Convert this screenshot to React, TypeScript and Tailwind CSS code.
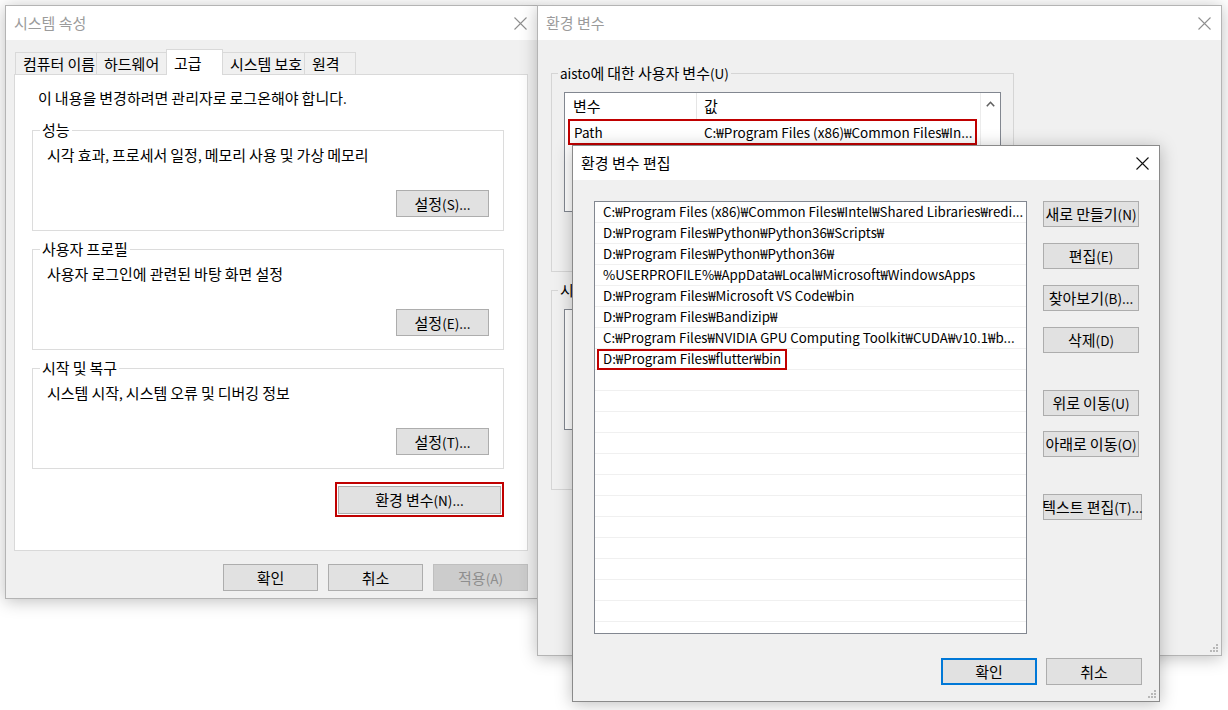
import React from 'react';

function T({ s }: { s: string }) {
  const parts = s.split(/([\u3131-\u318E\uAC00-\uD7A3]+)/);
  return (
    <span>
      {parts.map((p, i) =>
        i % 2 === 1 ? (
          <span key={i} className="text-[15px]">
            {p}
          </span>
        ) : (
          <React.Fragment key={i}>{p}</React.Fragment>
        )
      )}
    </span>
  );
}

function CloseX({ dark }: { dark?: boolean }) {
  return (
    <svg width="13" height="13" viewBox="0 0 13 13" className="block">
      <path d="M0.5 0.5L12.5 12.5M12.5 0.5L0.5 12.5" stroke={dark ? '#111111' : '#8f8f8f'} strokeWidth="1.1" />
    </svg>
  );
}

function Grip() {
  const pts = [
    [6, 0],
    [6, 3],
    [3, 3],
    [6, 6],
    [3, 6],
    [0, 6],
  ];
  return (
    <svg width="8" height="8" viewBox="0 0 8 8" className="absolute bottom-[3px] right-[3px]">
      {pts.map(([x, y], i) => (
        <rect key={i} x={x} y={y} width="2" height="2" fill="#b8b8b8" />
      ))}
    </svg>
  );
}

type BtnProps = {
  children: string;
  w?: string;
  h?: string;
  disabled?: boolean;
  primary?: boolean;
  className?: string;
};

function Btn({ children, w = 'w-[96px]', h = 'h-[26px]', disabled, primary, className = '' }: BtnProps) {
  const tone = disabled
    ? 'border bg-[#cccccc] border-[#bfbfbf] text-[#8e8e8e]'
    : primary
    ? 'border-2 bg-[#e1e1e1] border-[#0078d7] text-black'
    : 'border bg-[#e1e1e1] border-[#adadad] text-black';
  return (
    <div className={`flex shrink-0 items-center justify-center whitespace-nowrap leading-none ${w} ${h} ${tone} ${className}`}>
      <T s={children} />
    </div>
  );
}

function Win({
  className,
  title,
  active,
  grip,
  children,
}: {
  className: string;
  title: string;
  active?: boolean;
  grip?: boolean;
  children: React.ReactNode;
}) {
  return (
    <div
      className={`absolute flex flex-col border bg-[#f0f0f0] shadow-[0_2px_16px_rgba(0,0,0,0.26)] ${
        active ? 'border-[#8a8a8a]' : 'border-[#b4b4b4]'
      } ${className}`}
    >
      <div className="flex h-[34px] shrink-0 items-center justify-between bg-white pl-[8px] pr-[10px]">
        <span className={`text-[15px] ${active ? 'text-black' : 'text-[#9b9b9b]'}`}>{title}</span>
        <CloseX dark={active} />
      </div>
      {children}
      {grip && <Grip />}
    </div>
  );
}

function PerfGroup({ label, text, btn }: { label: string; text: string; btn: string }) {
  return (
    <div className="relative flex h-[101px] flex-col border border-[#dcdcdc]">
      <span className="absolute left-[7px] top-[-10px] bg-white px-[2px] leading-[18px]">
        <T s={label} />
      </span>
      <div className="pl-[14px] pt-[15px] leading-[18px]">
        <T s={text} />
      </div>
      <Btn w="w-[93px]" h="h-[27px]" className="mb-[13px] mr-[14px] mt-auto self-end">
        {btn}
      </Btn>
    </div>
  );
}

function SystemProps() {
  const tabs = [
    { t: '컴퓨터 이름', w: 'w-[82px]', sel: false },
    { t: '하드웨어', w: 'w-[71px]', sel: false },
    { t: '고급', w: 'w-[57px]', sel: true },
    { t: '시스템 보호', w: 'w-[83px]', sel: false },
    { t: '원격', w: 'w-[52px]', sel: false },
  ];
  return (
    <Win className="left-[5px] top-[5px] h-[594px] w-[533px]" title="시스템 속성">
      <div className="flex flex-1 flex-col px-[8px] pt-[9px]">
        <div className="flex h-[25px] items-end pl-[1px]">
          {tabs.map((tab, i) => (
            <div
              key={tab.t}
              className={`flex items-center whitespace-nowrap border border-b-0 border-[#d9d9d9] pl-[7px] leading-none ${tab.w} ${
                i > 0 ? '-ml-px' : ''
              } ${tab.sel ? 'relative z-10 -mb-px h-[26px] bg-white' : 'h-[22px] bg-[#f0f0f0]'}`}
            >
              <T s={tab.t} />
            </div>
          ))}
        </div>
        <div className="mr-[1px] flex h-[477px] flex-col border border-[#d9d9d9] bg-white">
          <div className="pl-[23px] pt-[14px] leading-[18px]">
            <T s="이 내용을 변경하려면 관리자로 로그온해야 합니다." />
          </div>
          <div className="ml-[17px] mt-[23px] flex w-[472px] flex-col gap-[18px]">
            <PerfGroup label="성능" text="시각 효과, 프로세서 일정, 메모리 사용 및 가상 메모리" btn="설정(S)..." />
            <PerfGroup label="사용자 프로필" text="사용자 로그인에 관련된 바탕 화면 설정" btn="설정(E)..." />
            <PerfGroup label="시작 및 복구" text="시스템 시작, 시스템 오류 및 디버깅 정보" btn="설정(T)..." />
          </div>
          <div className="ml-[17px] mt-[13px] flex w-[472px] justify-end">
            <div className="border-2 border-[#c00000] px-[1px] pb-[1px] pt-[2px]">
              <Btn w="w-[163px]" h="h-[28px]">
                환경 변수(N)...
              </Btn>
            </div>
          </div>
        </div>
        <div className="mt-[13px] flex justify-end gap-[10px] pr-[1px]">
          <Btn w="w-[95px]" h="h-[27px]">
            확인
          </Btn>
          <Btn w="w-[95px]" h="h-[27px]">
            취소
          </Btn>
          <Btn w="w-[95px]" h="h-[27px]" disabled>
            적용(A)
          </Btn>
        </div>
      </div>
    </Win>
  );
}

function VarList({ h, rows }: { h: string; rows: boolean }) {
  return (
    <div className={`ml-[12px] mt-[18px] flex w-[437px] border border-[#828790] bg-white ${h}`}>
      <div className="flex flex-1 flex-col overflow-hidden">
        {rows && (
          <>
            <div className="flex h-[26px] shrink-0 items-center">
              <div className="flex h-full w-[132px] items-center border-r border-[#e5e5e5] pl-[8px]">
                <T s="변수" />
              </div>
              <div className="pl-[7px]">
                <T s="값" />
              </div>
            </div>
            <div className="ml-[3px] flex h-[26px] w-[409px] items-center whitespace-nowrap border-2 border-[#c00000]">
              <div className="w-[134px] pl-[4px]">Path</div>
              <div>C:₩Program Files (x86)₩Common Files₩In...</div>
            </div>
          </>
        )}
      </div>
      <div className="flex w-[20px] shrink-0 justify-center border-l border-[#ececec] pt-[8px]">
        <svg width="9" height="6" viewBox="0 0 9 6" className="block">
          <path d="M0.8 5.2L4.5 1.3L8.2 5.2" fill="none" stroke="#606060" strokeWidth="1.6" />
        </svg>
      </div>
    </div>
  );
}

function EnvVars() {
  return (
    <Win className="left-[537px] top-[5px] h-[651px] w-[685px]" title="환경 변수" grip>
      <div className="flex flex-col pl-[13px] pt-[33px]">
        <div className="relative flex h-[199px] w-[463px] flex-col border border-[#d5d5d5]">
          <span className="absolute left-[6px] top-[-10px] bg-[#f0f0f0] px-[2px] leading-[18px]">
            <T s="aisto에 대한 사용자 변수(U)" />
          </span>
          <VarList h="h-[120px]" rows />
        </div>
        <div className="relative mt-[18px] flex h-[200px] w-[463px] flex-col border border-[#d5d5d5]">
          <span className="absolute left-[6px] top-[-10px] bg-[#f0f0f0] px-[2px] leading-[18px]">
            <T s="시스템 변수(S)" />
          </span>
          <VarList h="h-[121px]" rows={false} />
        </div>
      </div>
    </Win>
  );
}

const PATHS = [
  'C:₩Program Files (x86)₩Common Files₩Intel₩Shared Libraries₩redi...',
  'D:₩Program Files₩Python₩Python36₩Scripts₩',
  'D:₩Program Files₩Python₩Python36₩',
  '%USERPROFILE%₩AppData₩Local₩Microsoft₩WindowsApps',
  'D:₩Program Files₩Microsoft VS Code₩bin',
  'D:₩Program Files₩Bandizip₩',
  'C:₩Program Files₩NVIDIA GPU Computing Toolkit₩CUDA₩v10.1₩b...',
];

function EditEnv() {
  const empty = Array.from({ length: 13 }, (_, i) => i);
  return (
    <Win active className="left-[572px] top-[145px] h-[557px] w-[588px]" title="환경 변수 편집" grip>
      <div className="flex flex-col pl-[21px] pr-[17px] pt-[21px]">
        <div className="flex">
          <div className="flex h-[433px] w-[436px] flex-col overflow-hidden border border-[#828790] bg-white">
            {PATHS.map((p) => (
              <div key={p} className="flex h-[21px] shrink-0 items-center whitespace-nowrap border-b border-[#f0f0f0] pl-[8px] text-[13.3px]">
                {p}
              </div>
            ))}
            <div className="flex h-[21px] shrink-0 items-center border-b border-[#f0f0f0]">
              <div className="ml-[2px] flex h-[21px] items-center whitespace-nowrap border-2 border-[#c00000] pl-[4px] pr-[4px] text-[13.3px]">
                D:₩Program Files₩flutter₩bin
              </div>
            </div>
            {empty.map((i) => (
              <div key={i} className="h-[21px] shrink-0 border-b border-[#f0f0f0]" />
            ))}
          </div>
          <div className="ml-[16px] flex flex-col">
            <Btn>새로 만들기(N)</Btn>
            <Btn className="mt-[16px]">편집(E)</Btn>
            <Btn className="mt-[16px]">찾아보기(B)...</Btn>
            <Btn className="mt-[16px]">삭제(D)</Btn>
            <Btn className="mt-[37px]">위로 이동(U)</Btn>
            <Btn className="mt-[15px]">아래로 이동(O)</Btn>
            <Btn w="w-[99px]" className="mt-[37px]">
              텍스트 편집(T)...
            </Btn>
          </div>
        </div>
        <div className="mt-[24px] flex justify-end gap-[9px]">
          <Btn primary h="h-[27px]">
            확인
          </Btn>
          <Btn h="h-[27px]">취소</Btn>
        </div>
      </div>
    </Win>
  );
}

export default function App() {
  return (
    <div className="relative h-[710px] w-[1228px] overflow-hidden bg-white font-['Noto_Sans_CJK_KR','Noto_Sans',sans-serif] text-[13.5px] text-black">
      <SystemProps />
      <EnvVars />
      <EditEnv />
    </div>
  );
}
